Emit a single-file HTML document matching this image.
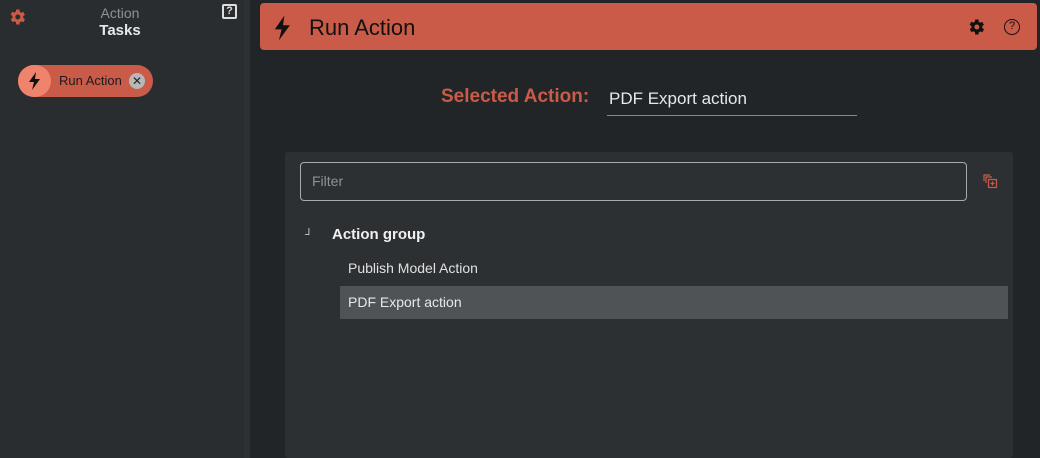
<!DOCTYPE html>
<html><head><style>
*{margin:0;padding:0;box-sizing:border-box}
body{width:1040px;height:458px;background:#222528;font-family:"Liberation Sans",sans-serif;position:relative;overflow:hidden}
.side{position:absolute;left:0;top:0;width:244px;height:458px;background:#2a2d30}
.sb{position:absolute;left:244px;top:0;width:6px;height:458px;background:#2e3134}
.abs{position:absolute}
</style></head><body>
<div class="side"></div><div class="sb"></div>
<svg class="abs" style="left:7px;top:7px" width="20" height="20" viewBox="0 0 24 24"><path fill="#c95b48" fill-rule="evenodd" d="M19.4 13a7.5 7.5 0 000-2l2.1-1.6-2-3.5-2.5 1a7.6 7.6 0 00-1.7-1L15 3h-4l-.4 2.7a7.6 7.6 0 00-1.7 1l-2.5-1-2 3.5L6.6 11a7.5 7.5 0 000 2l-2.1 1.6 2 3.5 2.5-1a7.6 7.6 0 001.7 1L11 21h4l.4-2.7a7.6 7.6 0 001.7-1l2.5 1 2-3.5zM13 15A3 3 0 1113 9a3 3 0 010 6z"/></svg>
<div class="abs" style="left:60px;width:120px;top:5px;text-align:center;color:#8e9296;font-size:14px">Action</div>
<div class="abs" style="left:60px;width:120px;top:22px;text-align:center;color:#e6e8ea;font-size:15px;font-weight:bold">Tasks</div>
<div class="abs" style="left:222px;top:4px;width:15px;height:15px;border:2px solid #ddd;border-radius:2px;color:#ddd;font-size:11px;font-weight:bold;text-align:center;line-height:11px">?</div>
<div class="abs" style="left:18px;top:65px;width:135px;height:32px;border-radius:16px;background:#c95b48"></div>
<div class="abs" style="left:18px;top:65px;width:33px;height:32px;border-radius:16px;background:#f0836c"></div>
<svg class="abs" style="left:27px;top:71px" width="16" height="20" viewBox="0 0 16 20"><path d="M9 1L2 11h5l-2 8 8-11H8z" fill="#111"/></svg>
<div class="abs" style="left:59px;top:73px;color:#1c1c1c;font-size:13px">Run Action</div>
<div class="abs" style="left:129px;top:73px;width:16px;height:16px;border-radius:8px;background:#b8b8b8;color:#222;font-size:12px;text-align:center;line-height:16px">✕</div>
<div class="abs" style="left:260px;top:3px;width:777px;height:47px;background:#c95b48;border-radius:4px"></div>
<svg class="abs" style="left:272px;top:14px" width="22" height="28" viewBox="0 0 16 20"><path d="M9 1L2 11h5l-2 8 8-11H8z" fill="#111"/></svg>
<div class="abs" style="left:309px;top:15px;color:#111;font-size:22px">Run Action</div>
<svg class="abs" style="left:966px;top:17px" width="20" height="20" viewBox="0 0 24 24"><path fill="#111" fill-rule="evenodd" d="M19.4 13a7.5 7.5 0 000-2l2.1-1.6-2-3.5-2.5 1a7.6 7.6 0 00-1.7-1L15 3h-4l-.4 2.7a7.6 7.6 0 00-1.7 1l-2.5-1-2 3.5L6.6 11a7.5 7.5 0 000 2l-2.1 1.6 2 3.5 2.5-1a7.6 7.6 0 001.7 1L11 21h4l.4-2.7a7.6 7.6 0 001.7-1l2.5 1 2-3.5zM13 15A3 3 0 1113 9a3 3 0 010 6z"/></svg>
<div class="abs" style="left:1004px;top:19px;width:16px;height:16px;border:1.5px solid #111;border-radius:50%;color:#111;font-size:11px;text-align:center;line-height:13px">?</div>
<div class="abs" style="left:441px;top:86px;color:#c95b48;font-size:19px;font-weight:bold">Selected Action:</div>
<div class="abs" style="left:609px;top:89px;color:#e6e8ea;font-size:17px">PDF Export action</div>
<div class="abs" style="left:607px;top:115px;width:250px;height:1px;background:#888"></div>
<div class="abs" style="left:285px;top:152px;width:728px;height:306px;background:#2d3033;border-radius:3px"></div>
<div class="abs" style="left:300px;top:162px;width:667px;height:39px;border:1px solid #aaa;border-radius:4px"></div>
<div class="abs" style="left:312px;top:173px;color:#8e9296;font-size:14px">Filter</div>
<svg class="abs" style="left:983px;top:174px" width="16" height="16" viewBox="0 0 16 16" fill="none" stroke="#c95b48" stroke-width="1.2"><path d="M1 7V1h6M3 9V3h6"/><rect x="5.5" y="5.5" width="8" height="8"/><path d="M9.5 7.5v4M7.5 9.5h4"/></svg>
<div class="abs" style="left:305px;top:229px;color:#ddd;font-size:11px;font-weight:bold">┘</div>
<div class="abs" style="left:332px;top:226px;color:#f0f0f0;font-size:15px;font-weight:bold">Action group</div>
<div class="abs" style="left:348px;top:260px;color:#e0e0e0;font-size:14px">Publish Model Action</div>
<div class="abs" style="left:340px;top:286px;width:668px;height:33px;background:#505356"></div>
<div class="abs" style="left:348px;top:294px;color:#e6e8ea;font-size:14px">PDF Export action</div>
</body></html>
